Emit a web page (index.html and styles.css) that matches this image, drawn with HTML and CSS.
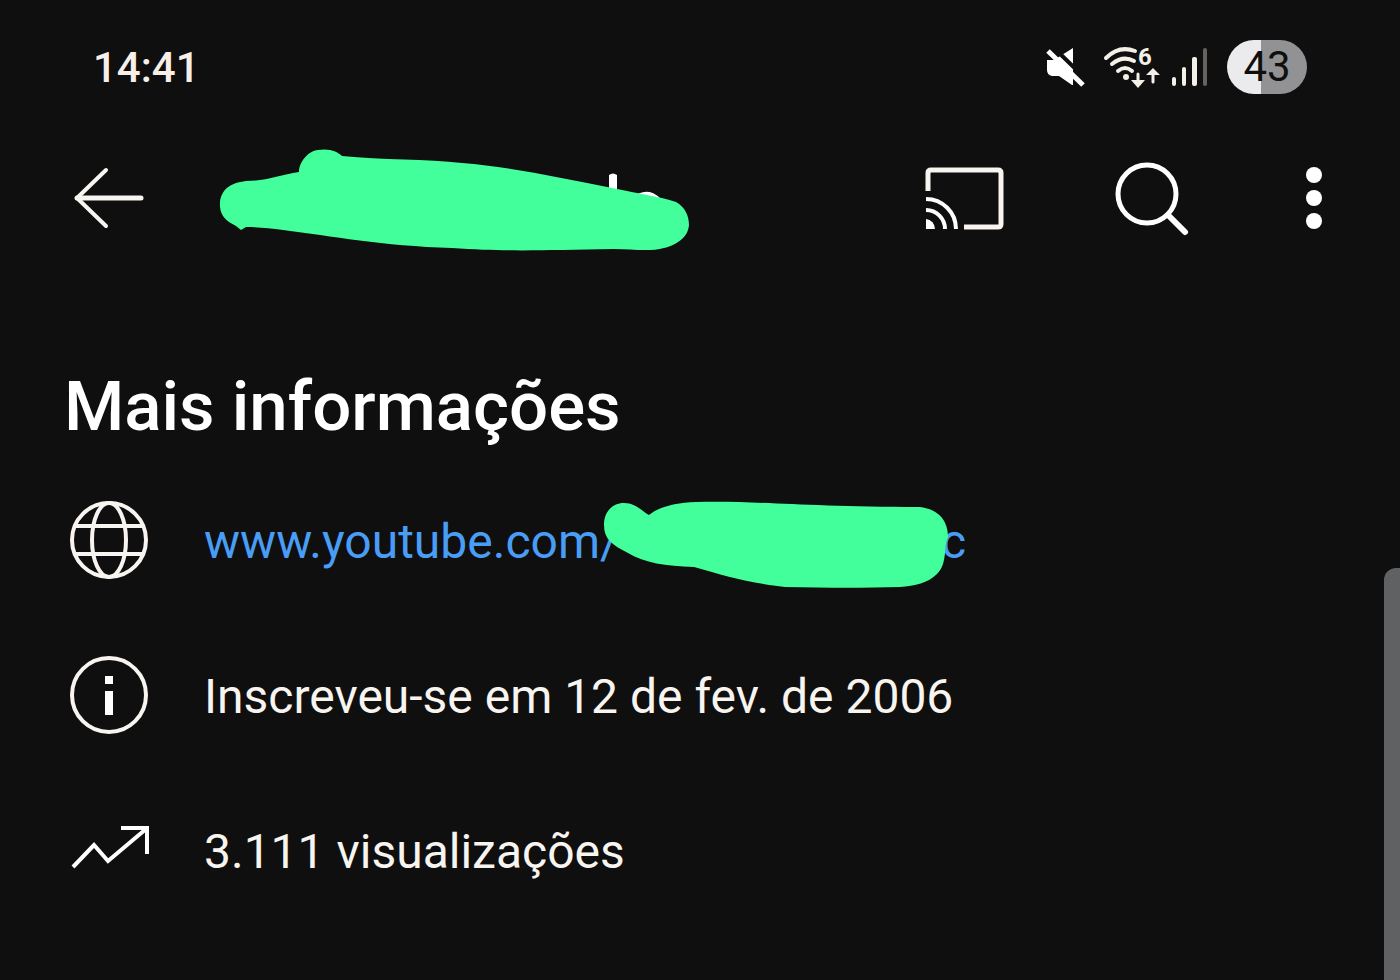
FILE: index.html
```html
<!DOCTYPE html>
<html lang="pt-BR">
<head>
    <meta charset="UTF-8">
    <meta name="viewport" content="width=device-width, initial-scale=1.0">
    <title>Mais informações</title>
    <link rel="stylesheet" href="styles.css">
</head>
<body>
    <div class="status-bar">
        <time class="clock">14:41</time>
        <div class="status-icons">
            <svg width="50" height="54" viewBox="0 0 50 54" aria-hidden="true">
                <path d="M4 20h7L30 8v37h-1L16 36H9Q4 35 4 30z" fill="#fff"/>
                <path d="M10 7L45 41" stroke="#0f0f0f" stroke-width="4"/>
                <path d="M5 11L40 45" stroke="#fff" stroke-width="5"/>
            </svg>
            <svg width="60" height="54" viewBox="0 0 60 54" aria-hidden="true">
                <g fill="none" stroke="#f4f0e8" stroke-width="4" stroke-linecap="round">
                    <path d="M5 18Q18 5 34 11"/>
                    <path d="M11 24Q22 15 33 21"/>
                    <path d="M17 31Q24 25 31 31"/>
                    <path d="M37 34v10M52 33v9" stroke-width="3"/>
                </g>
                <circle cx="25" cy="37" r="3" fill="#f4f0e8"/>
                <path d="M30 40h14l-7 8zM45 35h14l-7-7z" fill="#f4f0e8"/>
                <text class="wifi-number" x="37" y="25">6</text>
            </svg>
            <svg width="50" height="54" viewBox="0 0 50 54" aria-hidden="true">
                <g fill="#f4f0e8">
                    <rect x="3" y="37" width="4" height="9" rx="2"/>
                    <rect x="13" y="27" width="4" height="19" rx="2"/>
                    <rect x="23" y="17" width="5" height="29" rx="2"/>
                </g>
                <rect x="34" y="8" width="4" height="38" rx="2" fill="#66625f"/>
            </svg>
            <span class="battery">43</span>
        </div>
    </div>

    <header class="app-bar">
        <button type="button" class="icon-button" aria-label="Voltar">
            <svg width="80" height="80" viewBox="0 0 80 80" fill="none" stroke="#f8f4f0" stroke-width="5" stroke-linecap="round" stroke-linejoin="round">
                <path d="M38 12L9 40L38 68" stroke-width="4"/>
                <path d="M9 40H73"/>
            </svg>
        </button>
        <div class="channel-name">
            <svg width="480" height="110" viewBox="0 -2 480 110" aria-hidden="true">
                <path d="M397 30q4-3 8 0v26h-8zM420 53q14-12 27-1l6 8h-30z" fill="#fff"/>
                <path class="scribble" d="M8 62C7 45 18 38 34 36C54 36 68 30 87 27C87 17 96 6 106 5C118 3 126 7 130 11C170 15 215 14 250 18C300 22 350 33 400 43C428 49 450 52 464 57C473 62 477 71 477 80C476 93 464 100 452 103C438 107 420 104 402 104C330 105 300 107 240 103C170 101 120 91 71 85C58 83 45 82 34 82L29 85L24 81C14 76 9 71 8 62Z"/>
            </svg>
        </div>
        <div class="actions">
            <button type="button" class="icon-button" aria-label="Transmitir">
                <svg width="80" height="80" viewBox="0 0 80 80" fill="none" stroke="#fff" stroke-width="5">
                    <path d="M4 33V15Q4 12 7 12H74Q77 12 77 15V66Q77 69 74 69H40" stroke="#f8f4f0"/>
                    <path d="M2 41A30 30 0 0 1 32 71M2 52A19 19 0 0 1 21 71" stroke-width="4"/>
                    <path d="M2 61A10 10 0 0 1 11 71H2z" fill="#fff" stroke="none"/>
                </svg>
            </button>
            <button type="button" class="icon-button" aria-label="Pesquisar">
                <svg width="80" height="80" viewBox="0 0 80 80" fill="none" stroke="#fff" stroke-width="5">
                    <circle cx="35" cy="36" r="29"/>
                    <path d="M56 57L73 74" stroke-width="6" stroke-linecap="round"/>
                </svg>
            </button>
            <button type="button" class="icon-button menu-button" aria-label="Mais opções">
                <svg width="28" height="80" viewBox="0 0 28 80" fill="#fff">
                    <circle cx="14" cy="17" r="8"/>
                    <circle cx="14" cy="40" r="8"/>
                    <circle cx="14" cy="63" r="8"/>
                </svg>
            </button>
        </div>
    </header>

    <main>
        <h1>Mais informações</h1>
        <ul class="info-list">
            <li>
                <svg class="info-icon" width="80" height="80" viewBox="0 0 80 80" fill="none" stroke="#f8f4f0" stroke-width="4" aria-hidden="true">
                    <circle cx="40" cy="40" r="37"/>
                    <ellipse cx="40" cy="40" rx="17" ry="37"/>
                    <path d="M6 26H74M6 54H74"/>
                </svg>
                <a href="#" class="info-text channel-link"><span>www.youtube.com/</span><span>c</span>
                    <svg class="link-cover" width="350" height="90" viewBox="0 0 350 90" aria-hidden="true">
                        <path class="scribble" d="M4 26C4 12 13 4 24 4C36 4 43 13 49 16C60 7 76 4 96 3C150 1 200 8 320 8C337 10 348 20 348 38C346 42 345 48 345 54C344 64 342 70 337 75C328 84 315 87 300 88C265 89 230 89 185 88C150 84 125 77 94 68C65 67 45 64 28 54C12 46 4 40 4 26Z"/>
                    </svg>
                </a>
            </li>
            <li>
                <svg class="info-icon" width="80" height="80" viewBox="0 0 80 80" aria-hidden="true">
                    <circle cx="40" cy="40" r="37" fill="none" stroke="#f8f4f0" stroke-width="4"/>
                    <path d="M36 21h8v8h-8zM36 36h8v24h-8z" fill="#fff"/>
                </svg>
                <span class="info-text">Inscreveu-se em 12 de fev. de 2006</span>
            </li>
            <li>
                <svg class="info-icon" width="80" height="80" viewBox="0 0 80 80" fill="none" stroke="#fff" stroke-width="4" aria-hidden="true">
                    <path d="M4 57L25 35L39 51L77 19"/>
                    <path d="M52 18H78V44"/>
                </svg>
                <span class="info-text">3.111 visualizações</span>
            </li>
        </ul>
    </main>
    <div class="scroll-thumb"></div>
</body>
</html>
```

FILE: styles.css
```css
* {
    box-sizing: border-box;
}

body {
    position: relative;
    min-height: 100vh;
    margin: 0;
    background-color: #0f0f0f;
    color: #fff;
    font-family: Roboto, "Liberation Sans", sans-serif;
}

svg {
    display: block;
    flex-shrink: 0;
}

.status-bar {
    display: flex;
    align-items: center;
    justify-content: space-between;
    height: 132px;
    padding: 2px 93px 0;
}

.clock {
    color: #f8f0e8;
    font-size: 42px;
    font-weight: 500;
}

.status-icons {
    display: flex;
    align-items: center;
    gap: 8px;
}

.wifi-number {
    fill: #f4f0e8;
    font-size: 24px;
    font-weight: 700;
}

.battery {
    width: 80px;
    border-radius: 28px;
    background: linear-gradient(to right, #ebebed 43%, #929294 43%);
    color: #0f0f0f;
    font-size: 42px;
    line-height: 54px;
    text-align: center;
}

.app-bar {
    display: flex;
    align-items: center;
    height: 132px;
    padding: 0 72px 0 68px;
}

.icon-button {
    width: 80px;
    padding: 0;
    border: none;
    background: none;
    cursor: pointer;
}

.menu-button {
    width: 28px;
}

.channel-name {
    flex: 1;
    padding-left: 64px;
}

.scribble {
    fill: #43ff9b;
}

.actions {
    display: flex;
    gap: 108px;
}

main {
    padding: 103px 64px 52px;
}

h1 {
    margin: 0 0 15px;
    font-size: 69px;
    font-weight: 500;
    line-height: 80px;
}

.info-list {
    margin: 0;
    padding: 0;
    list-style: none;
}

.info-list li {
    display: flex;
    align-items: center;
    gap: 55px;
    height: 155px;
    padding-left: 5px;
    color: #f8f4f0;
    font-size: 48px;
}

.info-text {
    padding-top: 4px;
}

.info-list .channel-link {
    display: flex;
    position: relative;
    justify-content: space-between;
    width: 762px;
    color: #4a9df5;
    text-decoration: none;
}

/* covers the middle of the address */
.link-cover {
    position: absolute;
    top: -10px;
    right: 16px;
}

.scroll-thumb {
    position: absolute;
    top: 568px;
    right: 0;
    bottom: 0;
    width: 16px;
    border-radius: 12px 0 0 0;
    background-color: #606162;
}
```
